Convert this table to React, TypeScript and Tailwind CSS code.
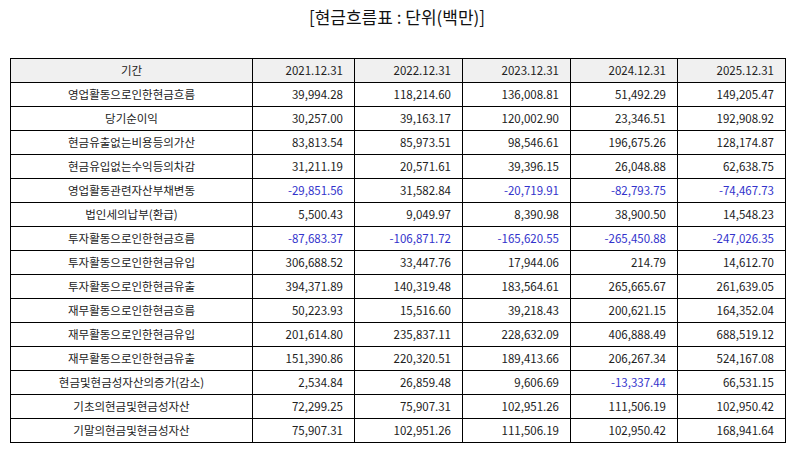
const years = ["2021.12.31", "2022.12.31", "2023.12.31", "2024.12.31", "2025.12.31"];

const rows: [string, string[]][] = [
  ["영업활동으로인한현금흐름", ["39,994.28", "118,214.60", "136,008.81", "51,492.29", "149,205.47"]],
  ["당기순이익", ["30,257.00", "39,163.17", "120,002.90", "23,346.51", "192,908.92"]],
  ["현금유출없는비용등의가산", ["83,813.54", "85,973.51", "98,546.61", "196,675.26", "128,174.87"]],
  ["현금유입없는수익등의차감", ["31,211.19", "20,571.61", "39,396.15", "26,048.88", "62,638.75"]],
  ["영업활동관련자산부채변동", ["-29,851.56", "31,582.84", "-20,719.91", "-82,793.75", "-74,467.73"]],
  ["법인세의납부(환급)", ["5,500.43", "9,049.97", "8,390.98", "38,900.50", "14,548.23"]],
  ["투자활동으로인한현금흐름", ["-87,683.37", "-106,871.72", "-165,620.55", "-265,450.88", "-247,026.35"]],
  ["투자활동으로인한현금유입", ["306,688.52", "33,447.76", "17,944.06", "214.79", "14,612.70"]],
  ["투자활동으로인한현금유출", ["394,371.89", "140,319.48", "183,564.61", "265,665.67", "261,639.05"]],
  ["재무활동으로인한현금흐름", ["50,223.93", "15,516.60", "39,218.43", "200,621.15", "164,352.04"]],
  ["재무활동으로인한현금유입", ["201,614.80", "235,837.11", "228,632.09", "406,888.49", "688,519.12"]],
  ["재무활동으로인한현금유출", ["151,390.86", "220,320.51", "189,413.66", "206,267.34", "524,167.08"]],
  ["현금및현금성자산의증가(감소)", ["2,534.84", "26,859.48", "9,606.69", "-13,337.44", "66,531.15"]],
  ["기초의현금및현금성자산", ["72,299.25", "75,907.31", "102,951.26", "111,506.19", "102,950.42"]],
  ["기말의현금및현금성자산", ["75,907.31", "102,951.26", "111,506.19", "102,950.42", "168,941.64"]],
];

export default function App() {
  return (
    <div
      className="w-[794px] h-[452px] bg-white px-[10px] text-[#222]"
      style={{ fontFamily: '"Noto Sans CJK KR", "Noto Sans", sans-serif' }}
    >
      <div className="pt-[5px] text-center text-[17px] leading-[24px] text-[#111]">[현금흐름표 : 단위(백만)]</div>
      <table className="mt-[29px] w-[775px] table-fixed border-collapse text-[11.5px]">
        <colgroup>
          <col className="w-[242px]" />
          <col className="w-[102px]" />
          <col className="w-[108px]" />
          <col className="w-[108px]" />
          <col className="w-[107px]" />
          <col className="w-[108px]" />
        </colgroup>
        <thead>
          <tr className="bg-[#f0f0f0]">
            <th className="h-[24px] border border-black p-0 text-center font-normal">기간</th>
            {years.map((y) => (
              <th key={y} className="h-[24px] border border-black p-0 pr-[11px] text-right font-normal">
                {y}
              </th>
            ))}
          </tr>
        </thead>
        <tbody>
          {rows.map(([label, vals]) => (
            <tr key={label}>
              <td className="h-[24px] border border-black p-0 text-center">{label}</td>
              {vals.map((v, i) => (
                <td
                  key={i}
                  className={
                    v.startsWith("-")
                      ? "h-[24px] border border-black p-0 pr-[11px] text-right text-[#3333cc]"
                      : "h-[24px] border border-black p-0 pr-[11px] text-right"
                  }
                >
                  {v}
                </td>
              ))}
            </tr>
          ))}
        </tbody>
      </table>
    </div>
  );
}
